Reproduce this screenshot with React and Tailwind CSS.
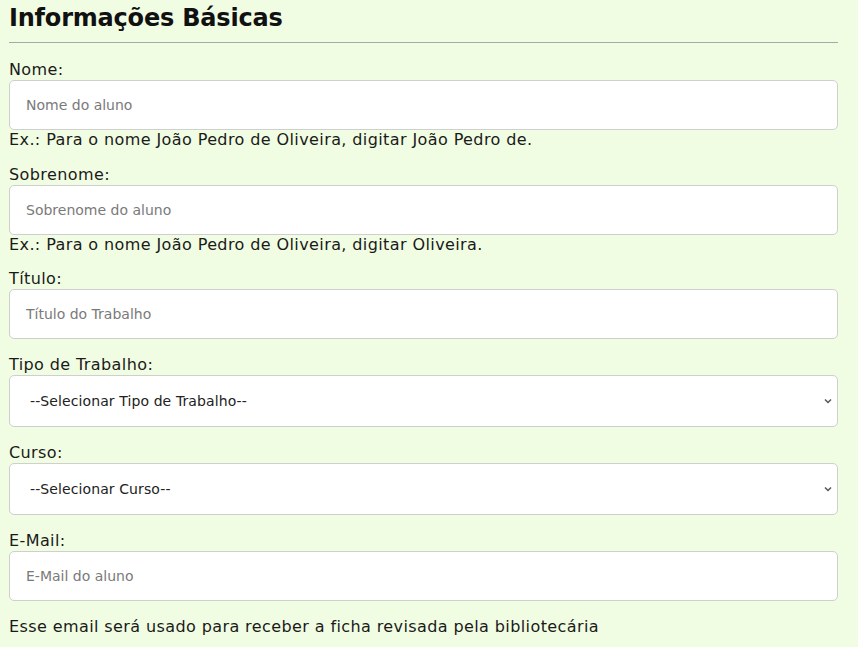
import React from 'react';

const font = { fontFamily: '"DejaVu Sans", "Noto Sans", sans-serif' };

const Field = ({ label, placeholder, hint, className = "" }) => (
  <div className={className}>
    <label className="block h-5 leading-5 text-[16px] tracking-[0.4px] text-[#1a1a1a]">{label}</label>
    <input
      type="text"
      placeholder={placeholder}
      className="block w-full h-[50px] px-4 bg-white border border-[#cfcfcf] rounded-[5px] text-[14px] text-[#333] placeholder:text-[#7a7a7a] outline-none"
    />
    {hint && <p className="h-5 leading-5 text-[16px] tracking-[0.4px] text-[#1a1a1a]">{hint}</p>}
  </div>
);

const SelectField = ({ label, option, className = "" }) => (
  <div className={className}>
    <label className="block h-5 leading-5 text-[16px] tracking-[0.4px] text-[#1a1a1a]">{label}</label>
    <div className="relative">
      <select className="block w-full h-[52px] pl-5 pr-8 appearance-none bg-white border border-[#cfcfcf] rounded-[5px] text-[14px] tracking-[0.1px] text-[#222] outline-none">
        <option>{option}</option>
      </select>
      <svg className="absolute right-[5px] top-1/2 -translate-y-1/2 w-[10px] h-[10px] pointer-events-none" viewBox="0 0 10 10">
        <path d="M2 3.5 L5 6.5 L8 3.5" fill="none" stroke="#555" strokeWidth="1.5" />
      </svg>
    </div>
  </div>
);

export default function App() {
  return (
    <div className="min-h-[647px] bg-[#f1fde3] px-[9px] pr-5" style={font}>
      <h2 className="text-[24px] leading-[36px] font-bold text-[#111] tracking-[-0.2px]">Informações Básicas</h2>
      <hr className="mt-[6px] border-0 border-t border-[#a8a8a8]" />
      <div className="pt-[17px]">
        <Field
          label="Nome:"
          placeholder="Nome do aluno"
          hint="Ex.: Para o nome João Pedro de Oliveira, digitar João Pedro de."
          className="mb-[15px]"
        />
        <Field
          label="Sobrenome:"
          placeholder="Sobrenome do aluno"
          hint="Ex.: Para o nome João Pedro de Oliveira, digitar Oliveira."
          className="mb-[14px]"
        />
        <Field label="Título:" placeholder="Título do Trabalho" className="mb-4" />
        <SelectField label="Tipo de Trabalho:" option="--Selecionar Tipo de Trabalho--" className="mb-4" />
        <SelectField label="Curso:" option="--Selecionar Curso--" className="mb-4" />
        <Field label="E-Mail:" placeholder="E-Mail do aluno" className="mb-4" />
        <p className="h-5 leading-5 text-[16px] tracking-[0.4px] text-[#1a1a1a]">
          Esse email será usado para receber a ficha revisada pela bibliotecária
        </p>
      </div>
    </div>
  );
}
